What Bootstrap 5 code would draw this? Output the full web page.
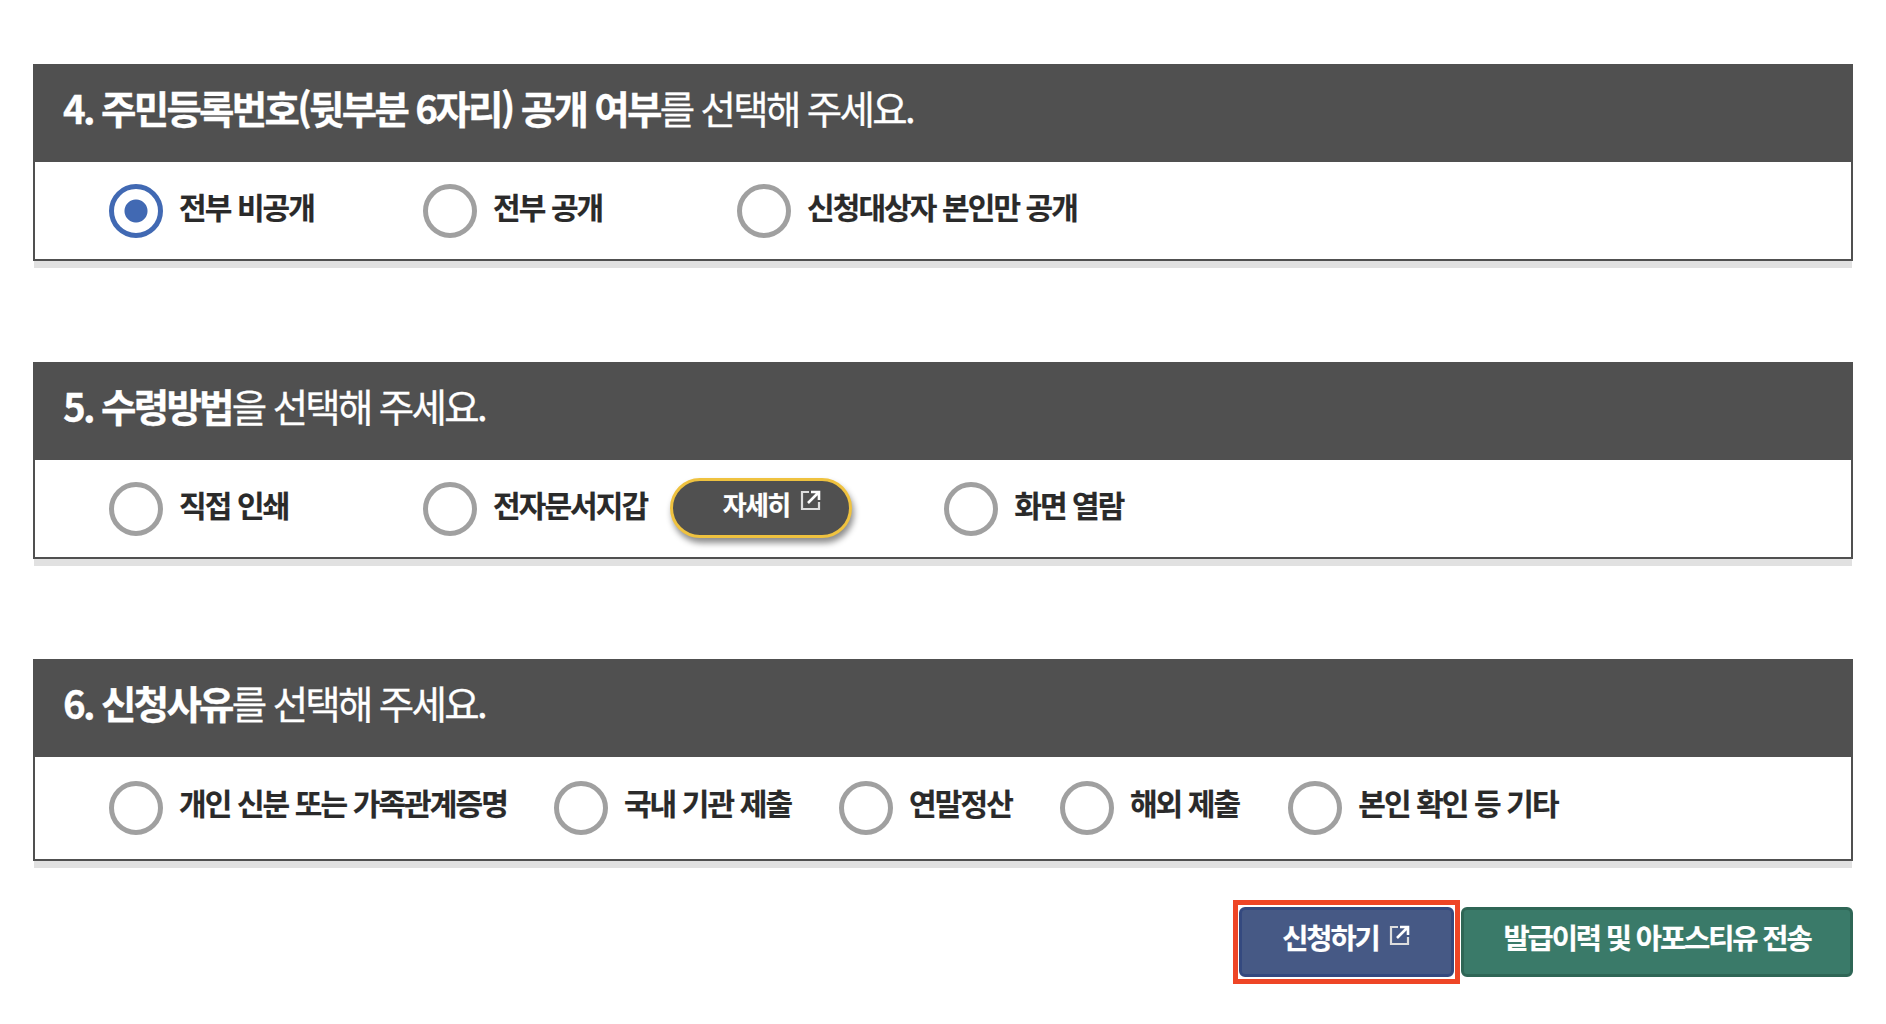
<!DOCTYPE html>
<html lang="ko">
<head>
<meta charset="utf-8">
<title>신청</title>
<link href="https://cdn.jsdelivr.net/npm/bootstrap@5.3.0/dist/css/bootstrap.min.css" rel="stylesheet">
<style>
body{font-family:"Noto Sans CJK KR","Noto Sans",sans-serif;background:#fff;color:#222}
.page-wrap{padding:64px 33px 0 33px}
.qbox{border:2px solid #505050;border-top:0;box-shadow:0 8px 0 -1px #e1e1e1;margin-bottom:100px;background:#fff}
.qbox.first-q{margin-bottom:101px}
.qbox.last-q{margin-bottom:0}
.qhead{background:#505050;color:#fff;height:98px;margin:0 -2px;padding:0 28px;font-size:38.5px;font-weight:400;letter-spacing:-2.7px;line-height:86px;-webkit-text-stroke:.3px #fff}
.qhead b{font-weight:700}
.qbody{height:97px;padding-left:74px}
.qbody.tall{height:102px;padding-bottom:2px}
.opt-item{gap:16px;font-size:30px;font-weight:700;letter-spacing:-1.9px;color:#2a2a2a;line-height:1;-webkit-text-stroke:.2px #2a2a2a}
.opt-item span.lbl{position:relative;top:-5px}
input.radio-big.form-check-input{width:54px;height:54px;margin:1px 0 0;border:5px solid #a0a0a0;background-color:#fff;flex:none;box-shadow:none;float:none}
input.radio-big.form-check-input:checked{border-color:#4169b3;background-color:#fff;background-image:radial-gradient(circle,#4169b3 0,#4169b3 11px,#fff 12px)}
.w1{width:314px}
.sp-a{margin-right:47px}
.sp-b{margin-right:48px}
.sp-c{margin-right:49px}
.pill-more{background:#505050;border:3px solid #efc23f;color:#fff;border-radius:30px;width:182px;height:60px;font-size:26px;font-weight:700;letter-spacing:-1.6px;box-shadow:2px 5px 6px rgba(0,0,0,.45);margin:-2px 92px 0 23px;padding:0 0 9px 22px;gap:10px;-webkit-text-stroke:.2px #fff}
.ext-ico{width:22px;height:22px;flex:none;position:relative;top:-3px}
.action-row{margin-top:39px;gap:1px}
.red-frame{border:5px solid #ee4526;padding:2px 1px}
.act-btn{height:70px;border-radius:6px;color:#fff;font-size:28.5px;font-weight:700;letter-spacing:-2.1px;border-width:3px;border-style:solid;padding:0 0 9px;gap:10px;line-height:1;-webkit-text-stroke:.2px #fff}
.act-blue{width:215px;background:#465985;border-color:#34497f}
.act-green{width:392px;background:#3a7a69;border-color:#2f6656}
.act-btn:hover{color:#fff}
</style>
</head>
<body>
<div class="page-wrap">
  <section class="qbox first-q">
    <h2 class="qhead m-0"><b>4. 주민등록번호(뒷부분 6자리) 공개 여부</b>를 선택해 주세요.</h2>
    <div class="qbody d-flex align-items-center">
      <label class="opt-item d-flex align-items-center w1"><input class="form-check-input radio-big" type="radio" name="q4" checked><span class="lbl">전부 비공개</span></label>
      <label class="opt-item d-flex align-items-center w1"><input class="form-check-input radio-big" type="radio" name="q4"><span class="lbl">전부 공개</span></label>
      <label class="opt-item d-flex align-items-center"><input class="form-check-input radio-big" type="radio" name="q4"><span class="lbl">신청대상자 본인만 공개</span></label>
    </div>
  </section>
  <section class="qbox">
    <h2 class="qhead m-0"><b>5. 수령방법</b>을 선택해 주세요.</h2>
    <div class="qbody d-flex align-items-center">
      <label class="opt-item d-flex align-items-center w1"><input class="form-check-input radio-big" type="radio" name="q5"><span class="lbl">직접 인쇄</span></label>
      <label class="opt-item d-flex align-items-center"><input class="form-check-input radio-big" type="radio" name="q5"><span class="lbl">전자문서지갑</span></label>
      <button type="button" class="btn pill-more d-flex align-items-center justify-content-center">자세히
        <svg class="ext-ico" viewBox="0 0 22 22" fill="none" stroke="#fff" stroke-width="2.6"><path d="M9 3H2v17h17v-7" stroke="#ddd" stroke-width="2.2"/><path d="M8 14 18 4M11 3h8v8"/></svg>
      </button>
      <label class="opt-item d-flex align-items-center"><input class="form-check-input radio-big" type="radio" name="q5"><span class="lbl">화면 열람</span></label>
    </div>
  </section>
  <section class="qbox last-q">
    <h2 class="qhead m-0"><b>6. 신청사유</b>를 선택해 주세요.</h2>
    <div class="qbody tall d-flex align-items-center">
      <label class="opt-item d-flex align-items-center sp-a"><input class="form-check-input radio-big" type="radio" name="q6"><span class="lbl">개인 신분 또는 가족관계증명</span></label>
      <label class="opt-item d-flex align-items-center sp-b"><input class="form-check-input radio-big" type="radio" name="q6"><span class="lbl">국내 기관 제출</span></label>
      <label class="opt-item d-flex align-items-center sp-b"><input class="form-check-input radio-big" type="radio" name="q6"><span class="lbl">연말정산</span></label>
      <label class="opt-item d-flex align-items-center sp-c"><input class="form-check-input radio-big" type="radio" name="q6"><span class="lbl">해외 제출</span></label>
      <label class="opt-item d-flex align-items-center"><input class="form-check-input radio-big" type="radio" name="q6"><span class="lbl">본인 확인 등 기타</span></label>
    </div>
  </section>
  <div class="action-row d-flex justify-content-end align-items-center">
    <div class="red-frame d-flex">
      <button type="button" class="btn act-btn act-blue d-inline-flex align-items-center justify-content-center">신청하기
        <svg class="ext-ico" viewBox="0 0 22 22" fill="none" stroke="#fff" stroke-width="2.6"><path d="M9 3H2v17h17v-7" stroke="#ddd" stroke-width="2.2"/><path d="M8 14 18 4M11 3h8v8"/></svg>
      </button>
    </div>
    <button type="button" class="btn act-btn act-green d-inline-flex align-items-center justify-content-center">발급이력 및 아포스티유 전송</button>
  </div>
</div>
<script src="https://cdn.jsdelivr.net/npm/bootstrap@5.3.0/dist/js/bootstrap.bundle.min.js"></script>
</body>
</html>
